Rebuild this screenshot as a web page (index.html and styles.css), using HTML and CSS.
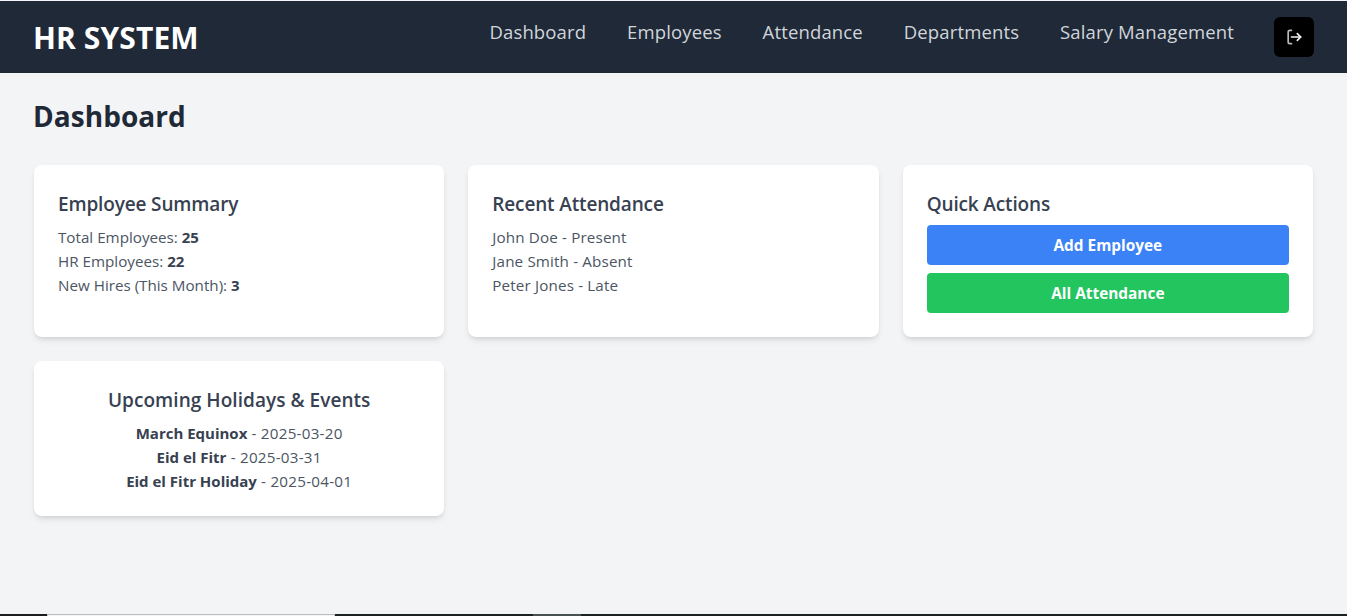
FILE: index.html
```html
<!DOCTYPE html>
<html lang="en">
<head>
<meta charset="utf-8">
<title>HR System</title>
<link rel="stylesheet" href="styles.css">
</head>
<body>
<header class="nav">
  <div class="brand">HR SYSTEM</div>
  <div class="actions">
    <nav class="links">
      <a href="#">Dashboard</a>
      <a href="#">Employees</a>
      <a href="#">Attendance</a>
      <a href="#">Departments</a>
      <a href="#">Salary Management</a>
    </nav>
    <button class="logout" aria-label="Log out">
      <svg class="logout-icon" viewBox="0 0 24 24" fill="none" stroke-width="2" stroke-linecap="round" stroke-linejoin="round"><path class="door" d="M9 4H7a2 2 0 0 0-2 2v12a2 2 0 0 0 2 2h2"/><path d="M9 12h11"/><path d="M16 8l4 4-4 4"/></svg>
    </button>
  </div>
</header>
<main class="main">
  <h1 class="title">Dashboard</h1>
  <div class="grid">
    <section class="card summary">
      <h2>Employee Summary</h2>
      <p>Total Employees: <b>25</b></p>
      <p>HR Employees: <b>22</b></p>
      <p>New Hires (This Month): <b>3</b></p>
    </section>
    <section class="card">
      <h2>Recent Attendance</h2>
      <p>John Doe - Present</p>
      <p>Jane Smith - Absent</p>
      <p>Peter Jones - Late</p>
    </section>
    <section class="card">
      <h2>Quick Actions</h2>
      <a class="btn blue" href="#">Add Employee</a>
      <a class="btn green" href="#">All Attendance</a>
    </section>
    <section class="card center">
      <h2>Upcoming Holidays &amp; Events</h2>
      <p><b>March Equinox</b> - 2025-03-20</p>
      <p><b>Eid el Fitr</b> - 2025-03-31</p>
      <p><b>Eid el Fitr Holiday</b> - 2025-04-01</p>
    </section>
  </div>
</main>
<div class="strip"><span class="s1"></span><span class="s2"></span><span class="s3"></span><span class="s4"></span><span class="s5"></span></div>
</body>
</html>
```
FILE: styles.css
```css
* { box-sizing: border-box; }
html, body { margin: 0; }
body {
  height: 616px;
  overflow: hidden;
  display: flex;
  flex-direction: column;
  background: #f3f4f6;
  font-family: "Open Sans", "Noto Sans", sans-serif;
  color: #4b5563;
  padding-top: 1px;
}
.nav {
  height: 72px;
  flex: none;
  background: #1f2937;
  display: flex;
  justify-content: space-between;
  padding: 16px 33px 16px 34px;
}
.brand {
  color: #fff;
  font-size: 30px;
  font-weight: 700;
  line-height: 42px;
  margin-left: -1px;
  letter-spacing: 0.1px;
}
.actions { display: flex; gap: 40px; height: 40px; }
.links { display: flex; gap: 40.8px; }
.links a {
  color: #d1d5db;
  font-size: 18.5px;
  line-height: 30px;
  text-decoration: none;
  letter-spacing: 0.15px;
}
.logout {
  width: 40px;
  height: 40px;
  border: 0;
  border-radius: 6px;
  background: #000;
  display: flex;
  align-items: center;
  justify-content: center;
  padding: 0;
}
.logout-icon { width: 20px; height: 20px; stroke: #f3f4f6; }
.logout-icon .door { stroke: #b6b9be; }
.main { flex: 1; padding: 23px 34px 0; }
.title {
  margin: 0 0 29px -1px;
  font-size: 28px;
  line-height: 40px;
  font-weight: 700;
  color: #1f2937;
  letter-spacing: 0.05px;
}
.grid {
  display: grid;
  grid-template-columns: repeat(3, 1fr);
  gap: 24px;
}
.card {
  background: #fff;
  border-radius: 8px;
  padding: 24px;
  box-shadow: 0 4px 6px -1px rgba(0,0,0,.1), 0 2px 4px -2px rgba(0,0,0,.1);
  font-size: 15.2px;
  line-height: 24px;
  letter-spacing: 0.15px;
}
.summary { letter-spacing: 0; }
.card h2 {
  margin: 0 0 6px;
  font-size: 19px;
  line-height: 30px;
  font-weight: 600;
  color: #374151;
  letter-spacing: -0.15px;
}
.card p { margin: 0; }
.card h2 + p { margin-top: 1px; }
.card b { font-size: 15px; font-weight: 700; color: #374151; letter-spacing: 0; }
.center { text-align: center; padding-bottom: 23px; letter-spacing: 0.25px; }
.center h2 { letter-spacing: 0.05px; }
.btn {
  display: block;
  height: 40px;
  border-radius: 4px;
  color: #fff;
  font-size: 15.4px;
  font-weight: 700;
  line-height: 41px;
  text-align: center;
  text-decoration: none;
  letter-spacing: 0;
}
.btn + .btn { margin-top: 8px; }
.blue { background: #3b82f6; }
.green { background: #22c55e; }
.strip { height: 2px; flex: none; display: flex; background: #1c2124; }
.s1 { width: 47px; background: #1c1d1f; }
.s2 { width: 288px; background: #f3f4f6; border-top: 1px solid #bdbdbd; border-left: 1px solid #bdbdbd; border-right: 1px solid #bdbdbd; }
.s3 { width: 198px; }
.s4 { width: 48px; background: #4a5151; }
.s5 { flex: 1; }
```
